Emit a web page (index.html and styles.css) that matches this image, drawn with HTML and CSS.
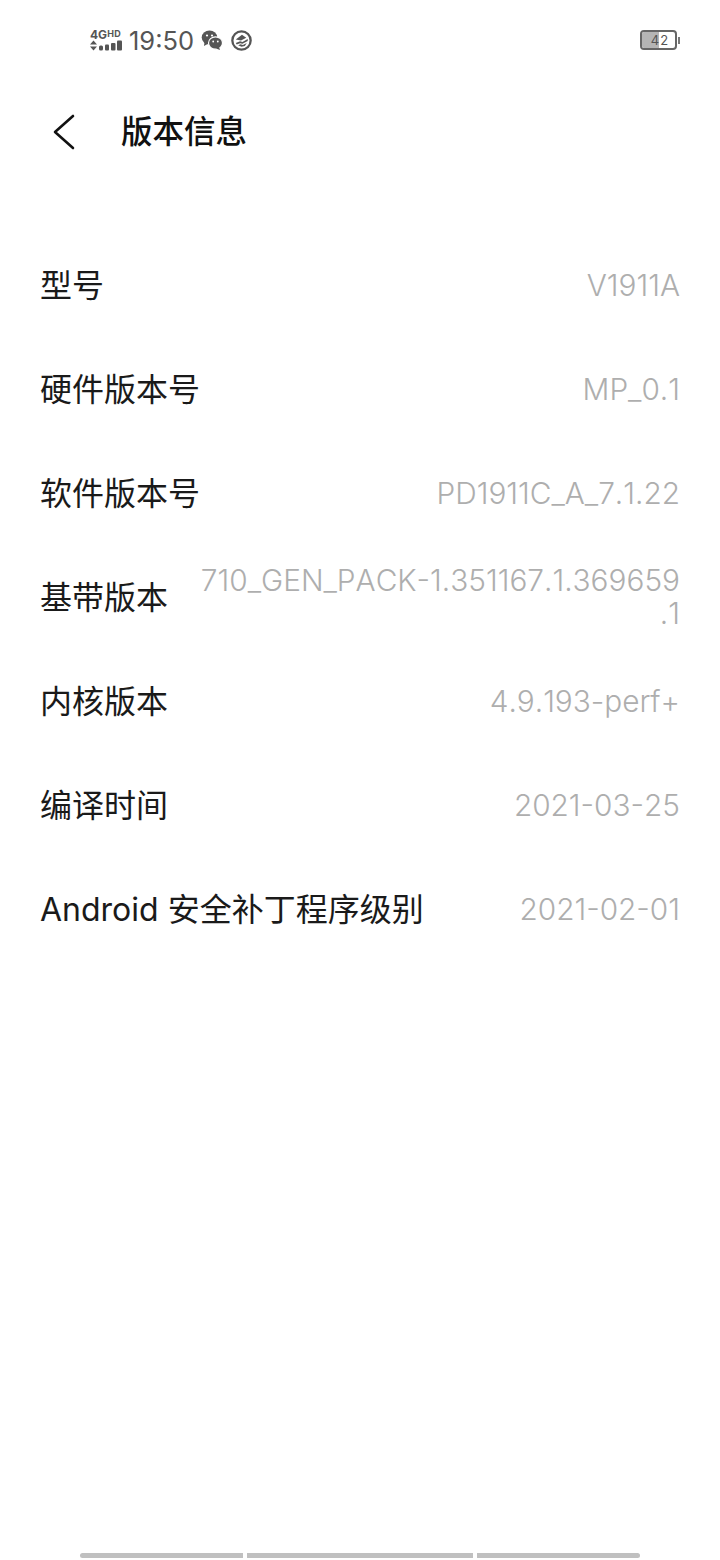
FILE: index.html
```html
<!DOCTYPE html>
<html lang="zh-CN">
<head>
    <meta charset="UTF-8">
    <meta name="viewport" content="width=device-width, initial-scale=1.0">
    <title>版本信息</title>
    <link rel="stylesheet" href="styles.css">
</head>
<body>

<div class="status-bar">
    <div class="status-left">
        <div class="signal">
            <div class="signal-top"><span class="net-4g">4G</span><span class="net-hd">HD</span></div>
            <div class="signal-bottom">
                <svg width="33" height="11" viewBox="0 0 33 11">
                    <path d="M3.5 0.5 L7 4.5 H0 Z M3.5 10.5 L0 6.5 H7 Z" fill="#555"/>
                    <rect x="9" y="5.5" width="4" height="5" rx="1.5" fill="#555"/>
                    <rect x="15" y="4.5" width="4" height="6" rx="1" fill="#555"/>
                    <rect x="21" y="3" width="4.5" height="7.5" rx="1" fill="#555"/>
                    <rect x="27" y="0.5" width="5" height="10" rx="1" fill="#555"/>
                </svg>
            </div>
        </div>
        <span class="clock">19:50</span>
        <svg class="status-icon" width="22" height="22" viewBox="0 0 22 22">
            <ellipse cx="8.5" cy="8.5" rx="7.8" ry="7" fill="#555"/>
            <path d="M3.5 13 L3 17 L7.5 14.5 Z" fill="#555"/>
            <ellipse cx="14.5" cy="14" rx="7" ry="6.2" fill="#555" stroke="#fff" stroke-width="1.2"/>
            <path d="M18 18 L19 21 L15 19.5 Z" fill="#555"/>
            <circle cx="6" cy="6.5" r="1.1" fill="#fff"/>
            <circle cx="11" cy="6.5" r="1.1" fill="#fff"/>
            <circle cx="12.2" cy="12.5" r="0.9" fill="#fff"/>
            <circle cx="16.8" cy="12.5" r="0.9" fill="#fff"/>
        </svg>
        <svg class="status-icon" width="21" height="21" viewBox="0 0 22 22">
            <circle cx="11" cy="11" r="9.6" fill="none" stroke="#555" stroke-width="2.4"/>
            <path d="M5 10 L11.5 5 L16 8 L10.5 11 Z M5 13.5 L9.5 11.8 L12 12.5 L17.5 9.5 L17.5 11.5 L12 14.5 L9.5 13.8 L6 15.2 Z M7.5 16 L10 15 L12.5 15.8 L16.5 13.5 L14.5 16.8 L11 17.6 Z" fill="#555"/>
        </svg>
    </div>
    <div class="battery">
        <div class="battery-body">
            <div class="battery-level" style="width: 50%"></div>
            <span class="battery-text">42</span>
        </div>
        <div class="battery-cap"></div>
    </div>
</div>

<header class="title-bar">
    <svg class="back-icon" width="24" height="36" viewBox="0 0 24 36">
        <path d="M21 2 L3 18 L21 34" fill="none" stroke="#111" stroke-width="2.6" stroke-linecap="round" stroke-linejoin="round"/>
    </svg>
    <h1>版本信息</h1>
</header>

<div class="info-list">
    <div class="info-row">
        <span class="info-label">型号</span>
        <span class="info-value">V1911A</span>
    </div>
    <div class="info-row">
        <span class="info-label">硬件版本号</span>
        <span class="info-value">MP_0.1</span>
    </div>
    <div class="info-row">
        <span class="info-label">软件版本号</span>
        <span class="info-value">PD1911C_A_7.1.22</span>
    </div>
    <div class="info-row">
        <span class="info-label">基带版本</span>
        <span class="info-value">710_GEN_PACK-1.351167.1.369659<br>.1</span>
    </div>
    <div class="info-row">
        <span class="info-label">内核版本</span>
        <span class="info-value">4.9.193-perf+</span>
    </div>
    <div class="info-row">
        <span class="info-label">编译时间</span>
        <span class="info-value">2021-03-25</span>
    </div>
    <div class="info-row">
        <span class="info-label">Android 安全补丁程序级别</span>
        <span class="info-value">2021-02-01</span>
    </div>
</div>

<div class="gesture-bar">
    <div class="gesture-left"></div>
    <div class="gesture-mid"></div>
    <div class="gesture-right"></div>
</div>

</body>
</html>
```

FILE: styles.css
```css
body {
    font-family: Inter, "Noto Sans CJK SC", sans-serif;
    margin: 0;
    padding: 0;
    width: 720px;
    height: 1560px;
    background-color: #fff;
    color: #111;
    display: flex;
    flex-direction: column;
    overflow: hidden;
}
.status-bar {
    height: 80px;
    padding: 0 40px 0 90px;
    display: flex;
    align-items: center;
    justify-content: space-between;
    color: #555;
}
.status-left {
    display: flex;
    align-items: center;
}
.signal {
    width: 33px;
    display: flex;
    flex-direction: column;
}
.signal-top {
    display: flex;
    align-items: flex-start;
    height: 10px;
    font-weight: 700;
    line-height: 10px;
}
.net-4g {
    font-size: 12px;
}
.net-hd {
    font-size: 9px;
    line-height: 8px;
    letter-spacing: 0.5px;
}
.signal-bottom {
    height: 11px;
}
.signal-bottom svg {
    display: block;
}
.clock {
    font-size: 25.5px;
    margin: 0 7px 0 6px;
}
.status-icon {
    margin-right: 8px;
}
.battery {
    display: flex;
    align-items: center;
    gap: 1px;
}
.battery-body {
    position: relative;
    width: 33px;
    height: 16px;
    border: 2px solid #666;
    border-radius: 4px;
    overflow: hidden;
}
.battery-level {
    height: 100%;
    background-color: #b5b5b5;
}
.battery-text {
    position: absolute;
    top: 0;
    left: 3px;
    right: 0;
    text-align: center;
    font-size: 13px;
    line-height: 16px;
    letter-spacing: 1px;
    color: #555;
}
.battery-cap {
    width: 2px;
    height: 7px;
    background-color: #777;
}
.title-bar {
    height: 104px;
    display: flex;
    align-items: center;
    padding-left: 52px;
}
.title-bar h1 {
    margin: 0 0 0 45px;
    font-size: 31.5px;
    line-height: 40px;
    font-weight: 500;
    color: #111;
}
.back-icon {
    display: block;
}
.info-list {
    margin-top: 49px;
    padding: 0 40px;
}
.info-row {
    height: 104px;
    display: flex;
    align-items: center;
    justify-content: space-between;
}
.info-label {
    font-size: 32px;
    line-height: 40px;
    margin-top: 2px;
    white-space: nowrap;
    color: #1a1a1a;
}
.info-value {
    font-size: 29.8px;
    font-weight: 300;
    font-kerning: none;
    line-height: 33px;
    text-align: right;
    color: #aeaeae;
}
.gesture-bar {
    margin-top: auto;
    margin-bottom: 2px;
    padding: 0 80px;
    display: flex;
    gap: 4px;
}
.gesture-bar div {
    height: 5px;
    background-color: #c0c0c0;
}
.gesture-left {
    width: 163px;
    border-radius: 3px 0 0 3px;
}
.gesture-mid {
    width: 226px;
}
.gesture-right {
    width: 163px;
    border-radius: 0 3px 3px 0;
}
```
